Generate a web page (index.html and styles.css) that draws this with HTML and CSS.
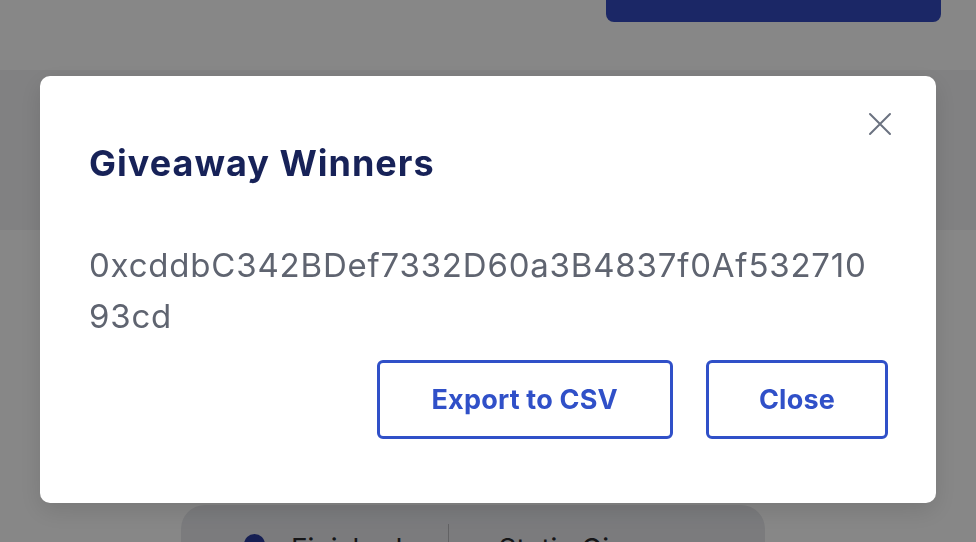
FILE: index.html
```html
<!DOCTYPE html>
<html lang="en">
<head>
<meta charset="utf-8">
<title>Giveaway Winners</title>
<link rel="stylesheet" href="styles.css">
</head>
<body>
<div class="page">
  <header class="topbar">
    <button class="primary-btn" type="button">Create Giveaway</button>
  </header>
  <section class="band"></section>
  <main class="main">
    <div class="status-card">
      <div class="status-item"><span class="dot"></span>Finished</div>
      <span class="divider"></span>
      <div class="status-item">Static Giveaway</div>
    </div>
  </main>
</div>

<div class="overlay"></div>

<div class="modal" role="dialog" aria-labelledby="modal-title">
  <button class="modal-close" type="button" aria-label="Close">
    <svg width="24" height="24" viewBox="0 0 24 24" fill="none" stroke="currentColor" stroke-width="2" stroke-linecap="round">
      <path d="M2 2 L22 22 M22 2 L2 22"/>
    </svg>
  </button>
  <h2 class="modal-title" id="modal-title">Giveaway Winners</h2>
  <p class="winner">0xcddbC342BDef7332D60a3B4837f0Af53271093cd</p>
  <div class="modal-actions">
    <button class="outline-btn outline-btn--wide" type="button">Export to CSV</button>
    <button class="outline-btn" type="button">Close</button>
  </div>
</div>
</body>
</html>
```

FILE: styles.css
```css
* { box-sizing: border-box; }

html, body {
  margin: 0;
  padding: 0;
  height: 100%;
  overflow: hidden;
}

body {
  font-family: Inter, "Noto Sans", "Liberation Sans", sans-serif;
  background: #ffffff;
}

.page {
  display: flex;
  flex-direction: column;
}

.topbar {
  flex-shrink: 0;
  height: 70px;
  display: flex;
  justify-content: flex-end;
  align-items: flex-start;
  padding-right: 35px;
  background: #ffffff;
}

.primary-btn {
  width: 335px;
  height: 22px;
  border: none;
  border-radius: 0 0 8px 8px;
  background: #334ac0;
  color: transparent;
  font-size: 1px;
}

.band {
  flex-shrink: 0;
  height: 160px;
  background: #f3f3f5;
}

.main {
  flex-shrink: 0;
  display: flex;
  justify-content: center;
  padding-top: 275px;
  padding-right: 30px;
}

.status-card {
  width: 584px;
  height: 120px;
  background: #e8e9ed;
  border-radius: 24px;
  display: flex;
  align-items: flex-start;
  padding: 27px 0 0 63px;
}

.status-item {
  display: flex;
  align-items: flex-start;
  gap: 26px;
  font-size: 28px;
  color: #2b2b2f;
  line-height: 34px;
}

.dot {
  width: 21px;
  height: 21px;
  border-radius: 50%;
  background: #2a3b9e;
  margin-top: 2px;
}

.divider {
  width: 1px;
  height: 60px;
  background: #b9b9bd;
  margin: -8px 49px 0 46px;
}

.overlay {
  position: fixed;
  inset: 0;
  background: rgba(0, 0, 0, 0.47);
}

.modal {
  position: fixed;
  left: 40px;
  top: 76px;
  width: 896px;
  height: 427px;
  background: #ffffff;
  border-radius: 10px;
  padding: 67px 48px 0 49px;
  box-shadow: 0 8px 24px rgba(0, 0, 0, 0.12);
}

.modal-close {
  position: absolute;
  right: 44px;
  top: 36px;
  width: 24px;
  height: 24px;
  padding: 0;
  border: none;
  background: none;
  color: #6b7280;
  display: flex;
}

.modal-title {
  margin: 0;
  font-size: 36px;
  line-height: 40px;
  font-weight: 700;
  letter-spacing: 1px;
  color: #172258;
}

.winner {
  margin: 57px 0 0;
  max-width: 792px;
  font-size: 33px;
  line-height: 51px;
  letter-spacing: 0.8px;
  color: #5f6470;
  word-break: break-all;
}

.modal-actions {
  display: flex;
  justify-content: flex-end;
  gap: 33px;
  margin-top: 18px;
}

.outline-btn {
  height: 79px;
  padding: 0 50px;
  border: 3px solid #3050c8;
  border-radius: 6px;
  background: #ffffff;
  color: #3050c8;
  font-family: Inter, "Noto Sans", "Liberation Sans", sans-serif;
  font-size: 27px;
  font-weight: 700;
  letter-spacing: 0.2px;
}

.outline-btn--wide {
  padding: 0 52px;
}
```
